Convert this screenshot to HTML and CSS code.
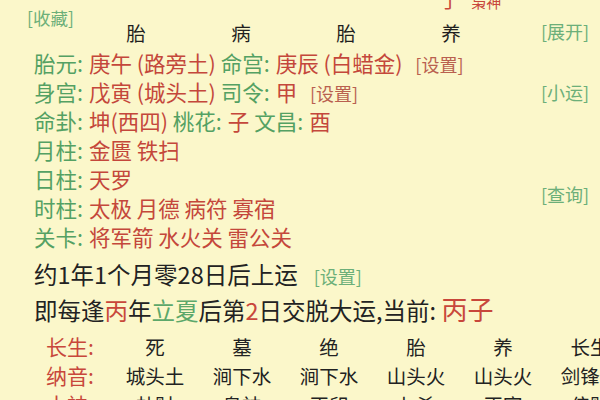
FILE: index.html
```html
<!DOCTYPE html>
<html lang="zh">
<head>
<meta charset="utf-8">
<link rel="stylesheet" href="styles.css">
</head>
<body>
<div class="page">
  <div class="row0"><span class="red">丁</span> <span class="red small">枭神</span></div>
  <div class="upper">
    <div class="main">
      <div class="head">
        <span class="link fav">[收藏]</span>
        <span class="hcell">胎</span>
        <span class="hcell">病</span>
        <span class="hcell">胎</span>
        <span class="hcell">养</span>
      </div>
      <div class="rows">
        <div class="row"><span class="lab">胎元:</span><span class="val">庚午 (路旁土)</span> <span class="lab">命宫:</span><span class="val">庚辰 (白蜡金)</span> <span class="set">[设置]</span></div>
        <div class="row"><span class="lab">身宫:</span><span class="val">戊寅 (城头土)</span> <span class="lab">司令:</span><span class="val">甲</span> <span class="set">[设置]</span></div>
        <div class="row"><span class="lab">命卦:</span><span class="val">坤(西四)</span> <span class="lab">桃花:</span><span class="val">子</span> <span class="lab">文昌:</span><span class="val">酉</span></div>
        <div class="row"><span class="lab">月柱:</span><span class="val">金匮 铁扫</span></div>
        <div class="row"><span class="lab">日柱:</span><span class="val">天罗</span></div>
        <div class="row"><span class="lab">时柱:</span><span class="val">太极 月德 病符 寡宿</span></div>
        <div class="row"><span class="lab">关卡:</span><span class="val">将军箭 水火关 雷公关</span></div>
      </div>
    </div>
    <div class="side">
      <span class="link s1">[展开]</span>
      <span class="link s2">[小运]</span>
      <span class="link s3">[查询]</span>
    </div>
  </div>
  <div class="luck">约1年1个月零28日后上运<span class="link lset">[设置]</span></div>
  <div class="luck2">即每逢<span class="red">丙</span>年<span class="green">立夏</span>后第<span class="red">2</span>日交脱大运,当前: <span class="red big">丙子</span></div>
  <div class="table">
    <div class="trow"><span class="tlab">长生:</span><span class="tc">死</span><span class="tc">墓</span><span class="tc">绝</span><span class="tc">胎</span><span class="tc">养</span><span class="tc">长生</span></div>
    <div class="trow"><span class="tlab">纳音:</span><span class="tc">城头土</span><span class="tc">涧下水</span><span class="tc">涧下水</span><span class="tc">山头火</span><span class="tc">山头火</span><span class="tc">剑锋金</span></div>
    <div class="trow"><span class="tlab">十神:</span><span class="tc">劫财</span><span class="tc">枭神</span><span class="tc">正印</span><span class="tc">七杀</span><span class="tc">正官</span><span class="tc">偏财</span></div>
  </div>
</div>
</body>
</html>
```

FILE: styles.css
```css
html, body {
  margin: 0;
  padding: 0;
  background: #fbf7ca;
  height: 400px;
  overflow: hidden;
}
.page {
  font-family: "Noto Sans CJK SC", "Noto Sans", sans-serif;
  color: #222;
  width: 600px;
  overflow: hidden;
  white-space: nowrap;
}
.red { color: #c8473b; }
.green { color: #5ca86a; }
.small { font-size: 15px; margin-left: 8px; }
.big { font-size: 26px; }

.row0 {
  height: 20px;
  margin-top: -10px;
  line-height: 20px;
  font-size: 19px;
  padding-left: 440px;
}

.upper {
  display: flex;
}
.main {
  width: 540px;
  flex: none;
}
.head {
  display: flex;
  height: 38px;
}
.link {
  color: #6caf79;
  font-size: 18px;
  line-height: 20px;
}
.fav {
  display: block;
  flex: none;
  width: 56.5px;
  padding-left: 27px;
  margin-top: -2px;
  font-size: 17.5px;
}
.hcell {
  flex: none;
  width: 105px;
  text-align: center;
  font-size: 19.5px;
  line-height: 24px;
  margin-top: 11px;
  color: #1f1f1f;
}
.rows {
  padding-left: 34px;
}
.row {
  height: 29px;
  line-height: 29px;
  font-size: 21.5px;
}
.lab {
  color: #54a163;
  margin-right: 6px;
}
.val {
  color: #c4473b;
}
.set {
  color: #b9604f;
  font-size: 18px;
  margin-left: 8px;
}
.side {
  display: flex;
  flex-direction: column;
  align-items: flex-start;
  padding-left: 1px;
}
.s1 { margin-top: 11px; }
.s2 { margin-top: 41px; }
.s3 { margin-top: 82px; }

.luck {
  margin-top: 6px;
  padding-left: 34px;
  font-size: 23.5px;
  line-height: 34px;
}
.lset {
  margin-left: 16px;
  font-size: 18px;
}
.luck2 {
  padding-left: 34px;
  font-size: 23.5px;
  line-height: 36px;
}
.table {
  margin-top: 4px;
}
.trow {
  display: flex;
  height: 29px;
  line-height: 29px;
  font-size: 19.5px;
}
.tlab {
  flex: none;
  width: 65.5px;
  padding-left: 46px;
  font-size: 21px;
  color: #c8473b;
}
.tc {
  width: 87px;
  flex: none;
  text-align: center;
  color: #222;
}
```
